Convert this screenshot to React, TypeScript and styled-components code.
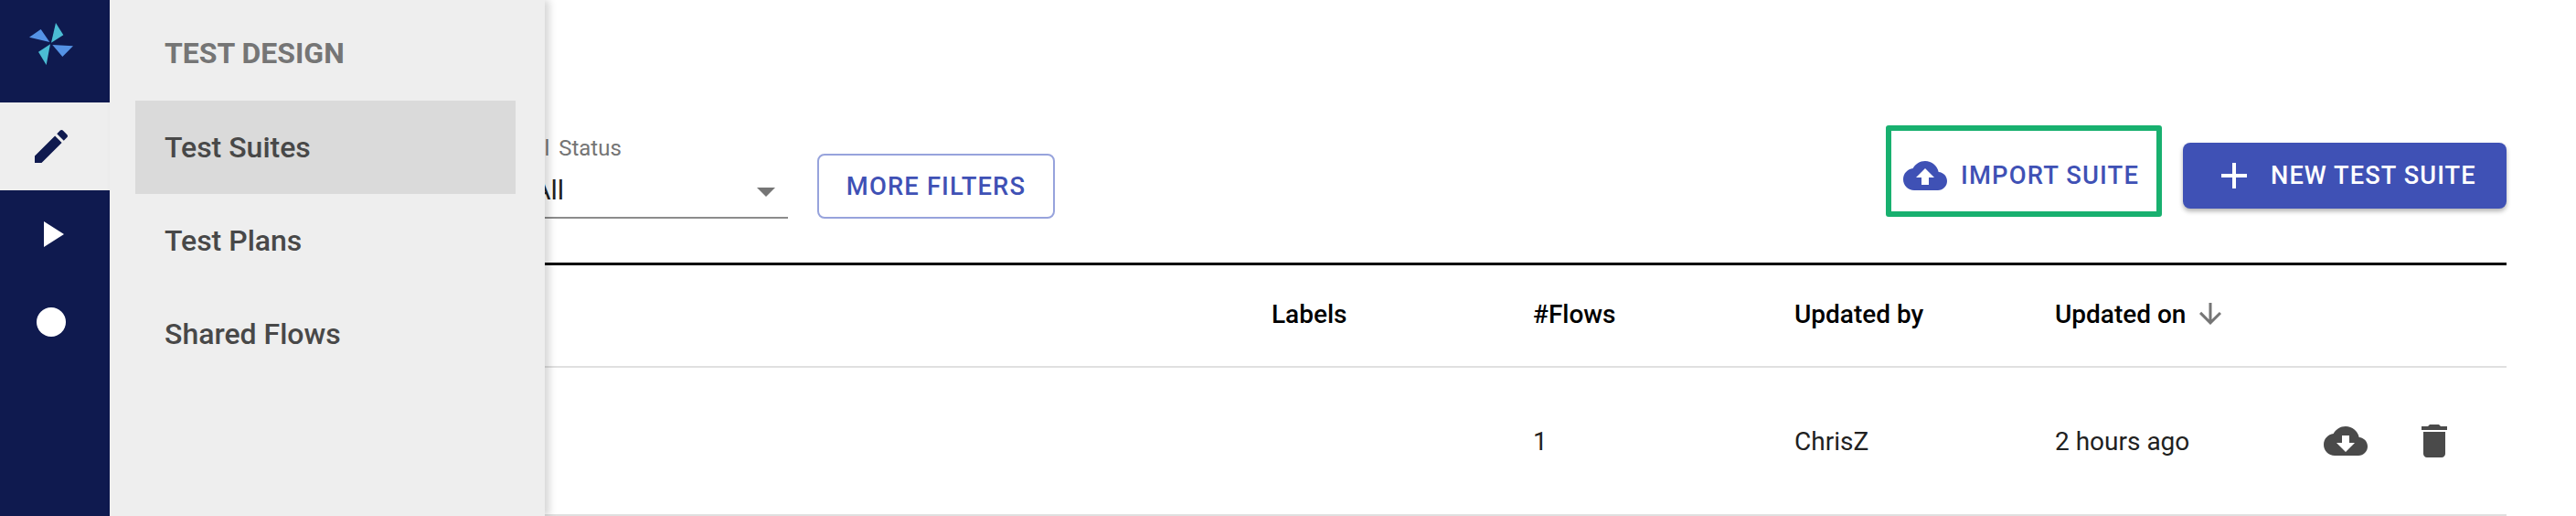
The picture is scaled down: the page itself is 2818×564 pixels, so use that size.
import React, { FC } from 'react';
import styled, { createGlobalStyle } from 'styled-components';

const GlobalStyle = createGlobalStyle`
  html, body, #root {
    height: 100%;
    margin: 0;
  }

  body {
    background: #fff;
    font-family: Roboto, "Liberation Sans", sans-serif;
    overflow: hidden;
  }
`;

const Page = styled.div`
  display: flex;
  height: 100%;
`;

const Rail = styled.nav`
  display: flex;
  flex-direction: column;
  flex: 0 0 120px;
  background: #0f1a4f;
`;

const LogoCell = styled.div`
  display: flex;
  justify-content: center;
  height: 112px;
  padding: 24px 8px 0 0;
  box-sizing: border-box;
`;

const RailItem = styled.a<{ $active?: boolean }>`
  display: flex;
  align-items: center;
  justify-content: center;
  height: 96px;
  padding-right: 8px;
  box-sizing: border-box;
  background: ${p => (p.$active ? '#eeeeee' : 'transparent')};
  color: ${p => (p.$active ? '#0f1a4f' : '#ffffff')};
`;

const Main = styled.main`
  position: relative;
  flex: 1;
  min-width: 0;
  padding-right: 76px;
`;

const Drawer = styled.aside`
  position: absolute;
  top: 0;
  left: 0;
  bottom: 0;
  z-index: 2;
  width: 476px;
  background: #eeeeee;
  box-shadow: 5px 0 8px rgba(0, 0, 0, 0.16);
`;

const DrawerTitle = styled.h2`
  display: flex;
  align-items: center;
  height: 110px;
  margin: 0;
  padding: 6px 0 0 60px;
  box-sizing: border-box;
  color: #757575;
  font-size: 32px;
  font-weight: 700;
`;

const DrawerItem = styled.a<{ $active?: boolean }>`
  display: flex;
  align-items: center;
  height: 102px;
  margin: 0 32px 0 28px;
  padding-left: 32px;
  background: ${p => (p.$active ? '#dadada' : 'transparent')};
  color: #484848;
  font-size: 32px;
  font-weight: 500;
`;

const Toolbar = styled.div`
  display: flex;
  justify-content: space-between;
  align-items: flex-start;
  height: 150px;
  margin-top: 137px;
  border-bottom: 3px solid #000;
`;

const Filters = styled.div`
  display: flex;
  align-items: flex-end;
  gap: 32px;
  height: 102px;
  padding-left: 434px;
`;

const SelectField = styled.div`
  width: 308px;
  height: 91px;
  border-bottom: 2px solid #8c8c8c;
  box-sizing: border-box;
`;

const SelectLabel = styled.div`
  height: 28px;
  margin-left: -4px;
  color: #757575;
  font-size: 24px;
  line-height: 28px;
  word-spacing: 4px;
`;

const SelectValue = styled.div`
  display: flex;
  align-items: center;
  justify-content: space-between;
  height: 44px;
  margin-top: 9px;
  padding: 0 14px 0 29px;
  color: #212121;
  font-size: 30px;
`;

const Caret = styled.span`
  width: 0;
  height: 0;
  margin-top: 6px;
  border-top: 10px solid #757575;
  border-left: 10px solid transparent;
  border-right: 10px solid transparent;
`;

const OutlineButton = styled.button`
  width: 260px;
  height: 71px;
  padding: 0;
  background: #fff;
  border: 2px solid #97a3dc;
  border-radius: 8px;
  color: #3f51b5;
  font-family: inherit;
  font-size: 27.4px;
  font-weight: 500;
  letter-spacing: 1.15px;
`;

const Actions = styled.div`
  display: flex;
  align-items: flex-start;
  gap: 23px;
`;

const ImportButton = styled.button`
  display: flex;
  align-items: center;
  gap: 15px;
  width: 302px;
  height: 100px;
  padding: 10px 0 0 13px;
  box-sizing: border-box;
  background: #fff;
  border: 6px solid #18b06f;
  border-radius: 3px;
  color: #3f51b5;
  font-family: inherit;
  font-size: 27.4px;
  font-weight: 500;
  letter-spacing: 1.15px;
`;

const PrimaryButton = styled.button`
  display: flex;
  align-items: center;
  gap: 16px;
  width: 354px;
  height: 72px;
  margin-top: 19px;
  padding: 0 0 0 32px;
  background: #3f51b5;
  border: 0;
  border-radius: 8px;
  box-shadow: 0 3px 5px rgba(0, 0, 0, 0.3);
  color: #fff;
  font-family: inherit;
  font-size: 27.2px;
  font-weight: 500;
  letter-spacing: 1.1px;
`;

const Row = styled.div<{ $head?: boolean }>`
  display: grid;
  grid-template-columns: 837px 286px 286px 285px 294px 1fr;
  align-items: center;
  height: ${p => (p.$head ? '112px' : '162px')};
  padding: ${p => (p.$head ? '0 0 4px 434px' : '0 0 0 434px')};
  border-bottom: 2px solid #e0e0e0;
  box-sizing: border-box;
  color: ${p => (p.$head ? '#000' : '#212121')};
  font-size: 28px;
  font-weight: ${p => (p.$head ? 500 : 400)};
`;

const SortLabel = styled.div`
  display: flex;
  align-items: center;
  gap: 9px;
`;

const RowIcons = styled.div`
  display: flex;
  align-items: center;
  gap: 49px;
  color: #4a4a4a;
`;

const Glyph: FC<{ d: string; size?: number; color?: string }> = ({ d, size = 48, color = 'currentColor' }) => (
  <svg width={size} height={size} viewBox="0 0 24 24" fill={color} style={{ flex: 'none', display: 'block' }}>
    <path d={d} />
  </svg>
);

const CLOUD =
  'M19.35 10.04C18.67 6.59 15.64 4 12 4 9.11 4 6.6 5.64 5.35 8.04 2.34 8.36 0 10.91 0 14c0 3.31 2.69 6 6 6h13c2.76 0 5-2.24 5-5 0-2.64-2.05-4.78-4.65-4.96z';

const Logo: FC = () => (
  <svg width={48} height={48} viewBox="96 72 144 144">
    <polygon points="96,122 134,96 163,138" fill="#5593e6" />
    <polygon points="183,75 208,115 168,140" fill="#4bbdd4" />
    <polygon points="172,147 240,151 205,186" fill="#5593e6" />
    <polygon points="165,145 126,170 152,213" fill="#4bbdd4" />
  </svg>
);

const App: FC = () => (
  <Page>
    <GlobalStyle />
    <Rail>
      <LogoCell><Logo /></LogoCell>
      <RailItem $active>
        <Glyph d="M3 17.25V21h3.75L17.81 9.94l-3.75-3.75L3 17.25zM20.71 7.04c.39-.39.39-1.02 0-1.41l-2.34-2.34c-.39-.39-1.02-.39-1.41 0l-1.83 1.83 3.75 3.75 1.83-1.83z" />
      </RailItem>
      <RailItem><Glyph d="M8 5v14l11-7z" /></RailItem>
      <RailItem><Glyph d="M4 12a8 8 0 1 0 16 0a8 8 0 1 0 -16 0" /></RailItem>
    </Rail>
    <Main>
      <Drawer>
        <DrawerTitle>TEST DESIGN</DrawerTitle>
        <DrawerItem $active>Test Suites</DrawerItem>
        <DrawerItem>Test Plans</DrawerItem>
        <DrawerItem>Shared Flows</DrawerItem>
      </Drawer>
      <Toolbar>
        <Filters>
          <SelectField>
            <SelectLabel>Final Status</SelectLabel>
            <SelectValue>All<Caret /></SelectValue>
          </SelectField>
          <OutlineButton>MORE FILTERS</OutlineButton>
        </Filters>
        <Actions>
          <ImportButton>
            <Glyph d={`${CLOUD}M14 13v4h-4v-4H7l5-5 5 5h-3z`} />
            IMPORT SUITE
          </ImportButton>
          <PrimaryButton>
            <Glyph d="M19 13h-6v6h-2v-6H5v-2h6V5h2v6h6v2z" />
            NEW TEST SUITE
          </PrimaryButton>
        </Actions>
      </Toolbar>
      <Row $head>
        <div />
        <div>Labels</div>
        <div>#Flows</div>
        <div>Updated by</div>
        <SortLabel>
          Updated on
          <Glyph d="M20 12l-1.41-1.41L13 16.17V4h-2v12.17l-5.58-5.59L4 12l8 8 8-8z" size={36} color="#757575" />
        </SortLabel>
        <div />
      </Row>
      <Row>
        <div />
        <div />
        <div>1</div>
        <div>ChrisZ</div>
        <div>2 hours ago</div>
        <RowIcons>
          <Glyph d={`${CLOUD}M17 13l-5 5-5-5h3V9h4v4h3z`} />
          <Glyph d="M6 19c0 1.1.9 2 2 2h8c1.1 0 2-.9 2-2V7H6v12zM19 4h-3.5l-1-1h-5l-1 1H5v2h14V4z" />
        </RowIcons>
      </Row>
    </Main>
  </Page>
);

export default App;
